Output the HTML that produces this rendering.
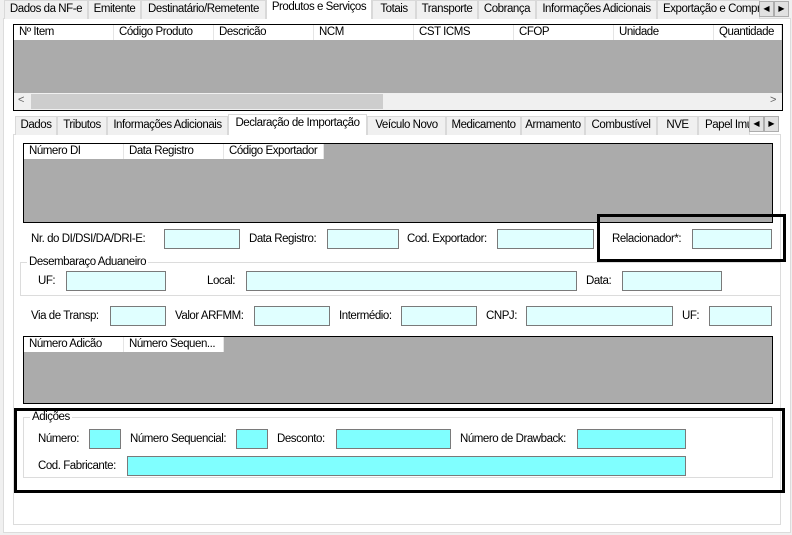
<!DOCTYPE html>
<html><head><meta charset="utf-8"><style>
*{box-sizing:border-box;margin:0;padding:0}
body{width:792px;height:535px;background:#f0f0f0;font-family:"Liberation Sans",sans-serif;font-size:11.5px;color:#000;position:relative;overflow:hidden;letter-spacing:-0.45px}
.a{position:absolute}
.tab{position:absolute;height:19px;border:1px solid #d9d9d9;border-bottom:none;background:#f0f0f0;padding:2px 0 0 0;text-align:center;white-space:nowrap;overflow:hidden}
.tab.act{background:#fff;border-color:#d9d9d9;z-index:3}
.arr{position:absolute;width:15px;height:16px;border:1px solid #adadad;background:#e1e1e1;font-size:8px;text-align:center;line-height:14px;letter-spacing:0}
.panel{position:absolute;background:#fff;border:1px solid #dcdcdc}
.grid{position:absolute;border:1px solid #000;background:#ababab}
.hd{position:absolute;background:#fff;height:15px;top:0;left:0;white-space:nowrap}
.hd span{position:absolute;top:0;height:15px;border-right:1px solid #e5e5e5;padding-left:5px;line-height:14px}
.in{position:absolute;height:20px;border:1px solid #7a7a7a;background:#e0ffff}
.cy{background:#80ffff}
.l{position:absolute;white-space:nowrap}
.gb{position:absolute;border:1px solid #dcdcdc}
.gl{position:absolute;background:#fff;padding:0 2px;white-space:nowrap;line-height:12px}
.bb{position:absolute;border:3px solid #000}
</style></head><body>
<div class="panel" style="left:3px;top:18px;width:788px;height:515px"></div>
<div class="tab" style="left:4px;top:0;width:84px">Dados da NF-e</div>
<div class="tab" style="left:88px;top:0;width:53px">Emitente</div>
<div class="tab" style="left:141px;top:0;width:125px">Destinatário/Remetente</div>
<div class="tab act" style="left:266px;top:-2px;width:106px;height:21px">Produtos e Serviços</div>
<div class="tab" style="left:372px;top:0;width:44px">Totais</div>
<div class="tab" style="left:416px;top:0;width:62px">Transporte</div>
<div class="tab" style="left:478px;top:0;width:58px">Cobrança</div>
<div class="tab" style="left:536px;top:0;width:121px">Informações Adicionais</div>
<div class="tab" style="left:657px;top:0;width:103px;text-align:left;padding-left:5px">Exportação e Compra</div>
<div class="arr" style="left:759px;top:1px">◀</div>
<div class="arr" style="left:774px;top:1px">▶</div>

<div class="grid" style="left:13px;top:24px;width:770px;height:87px">
 <div class="hd" style="width:768px">
  <span style="left:0;width:100px">Nº Item</span><span style="left:100px;width:100px">Código Produto</span><span style="left:200px;width:100px">Descricão</span><span style="left:300px;width:100px">NCM</span><span style="left:400px;width:100px">CST ICMS</span><span style="left:500px;width:100px">CFOP</span><span style="left:600px;width:100px">Unidade</span><span style="left:700px;width:68px">Quantidade</span>
 </div>
 <div class="a" style="left:0;top:68px;width:768px;height:17px;background:#f0f0f0">
  <div class="a" style="left:17px;top:1px;width:352px;height:15px;background:#cdcdcd"></div>
  <div class="a" style="left:4px;top:1px;font-size:11px;color:#606060">&lt;</div>
  <div class="a" style="left:756px;top:1px;font-size:11px;color:#606060">&gt;</div>
 </div>
</div>

<div class="panel" style="left:13px;top:134px;width:768px;height:391px"></div>
<div class="tab" style="left:15px;top:116px;width:42px">Dados</div>
<div class="tab" style="left:57px;top:116px;width:50px">Tributos</div>
<div class="tab" style="left:107px;top:116px;width:121px">Informações Adicionais</div>
<div class="tab act" style="left:228px;top:114px;width:139px;height:21px">Declaração de Importação</div>
<div class="tab" style="left:367px;top:116px;width:79px">Veículo Novo</div>
<div class="tab" style="left:446px;top:116px;width:75px">Medicamento</div>
<div class="tab" style="left:521px;top:116px;width:64px">Armamento</div>
<div class="tab" style="left:585px;top:116px;width:72px">Combustível</div>
<div class="tab" style="left:657px;top:116px;width:41px">NVE</div>
<div class="tab" style="left:698px;top:116px;width:52px;text-align:left;padding-left:6px">Papel Imune</div>
<div class="arr" style="left:749px;top:116px">◀</div>
<div class="arr" style="left:764px;top:116px">▶</div>

<div class="grid" style="left:23px;top:143px;width:750px;height:80px">
 <div class="hd" style="width:300px"><span style="left:0;width:100px">Número DI</span><span style="left:100px;width:100px">Data Registro</span><span style="left:200px;width:100px">Código Exportador</span></div>
</div>

<div class="l" style="left:31px;top:233px">Nr. do DI/DSI/DA/DRI-E:</div>
<div class="in" style="left:164px;top:229px;width:76px"></div>
<div class="l" style="left:249px;top:233px">Data Registro:</div>
<div class="in" style="left:327px;top:229px;width:72px"></div>
<div class="l" style="left:407px;top:233px">Cod. Exportador:</div>
<div class="in" style="left:497px;top:229px;width:97px"></div>
<div class="l" style="left:612px;top:233px">Relacionador*:</div>
<div class="in" style="left:692px;top:229px;width:80px"></div>
<div class="bb" style="left:597px;top:214px;width:189px;height:48px"></div>

<div class="gb" style="left:20px;top:262px;width:761px;height:34px"></div>
<div class="gl" style="left:27px;top:256px">Desembaraço Aduaneiro</div>
<div class="l" style="left:38px;top:275px">UF:</div>
<div class="in" style="left:66px;top:271px;width:100px"></div>
<div class="l" style="left:207px;top:275px">Local:</div>
<div class="in" style="left:246px;top:271px;width:331px"></div>
<div class="l" style="left:586px;top:275px">Data:</div>
<div class="in" style="left:622px;top:271px;width:100px"></div>

<div class="l" style="left:31px;top:310px">Via de Transp:</div>
<div class="in" style="left:110px;top:306px;width:56px"></div>
<div class="l" style="left:175px;top:310px">Valor ARFMM:</div>
<div class="in" style="left:254px;top:306px;width:76px"></div>
<div class="l" style="left:339px;top:310px">Intermédio:</div>
<div class="in" style="left:401px;top:306px;width:76px"></div>
<div class="l" style="left:486px;top:310px">CNPJ:</div>
<div class="in" style="left:526px;top:306px;width:147px"></div>
<div class="l" style="left:682px;top:310px">UF:</div>
<div class="in" style="left:709px;top:306px;width:63px"></div>

<div class="grid" style="left:23px;top:336px;width:750px;height:68px">
 <div class="hd" style="width:200px"><span style="left:0;width:100px">Número Adicão</span><span style="left:100px;width:100px">Número Sequen...</span></div>
</div>

<div class="gb" style="left:23px;top:417px;width:750px;height:61px"></div>
<div class="gl" style="left:30px;top:411px">Adições</div>
<div class="l" style="left:38px;top:433px">Número:</div>
<div class="in cy" style="left:89px;top:429px;width:32px"></div>
<div class="l" style="left:130px;top:433px">Número Sequencial:</div>
<div class="in cy" style="left:236px;top:429px;width:32px"></div>
<div class="l" style="left:277px;top:433px">Desconto:</div>
<div class="in cy" style="left:336px;top:429px;width:115px"></div>
<div class="l" style="left:460px;top:433px">Número de Drawback:</div>
<div class="in cy" style="left:577px;top:429px;width:109px"></div>
<div class="l" style="left:38px;top:460px">Cod. Fabricante:</div>
<div class="in cy" style="left:127px;top:456px;width:559px"></div>
<div class="bb" style="left:14px;top:408px;width:771px;height:85px"></div>
</body></html>
